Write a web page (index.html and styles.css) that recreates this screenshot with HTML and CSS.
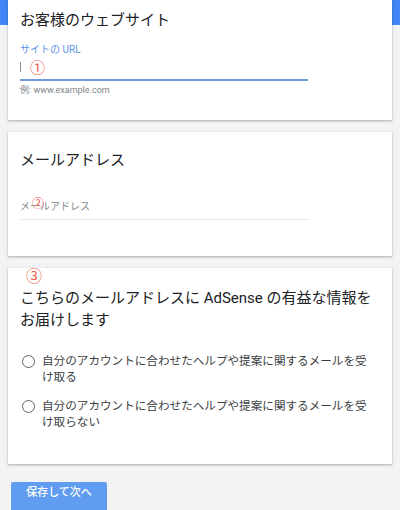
FILE: index.html
```html
<!DOCTYPE html>
<html lang="ja">
<head>
<meta charset="utf-8">
<title>AdSense</title>
<link rel="stylesheet" href="styles.css">
</head>
<body>
<div class="page">
  <section class="card card-site">
    <h2 class="card-title">お客様のウェブサイト</h2>
    <div class="field-label">サイトの URL</div>
    <div class="field-input active"><span class="cursor"></span></div>
    <div class="field-help">例: www.example.com</div>
    <span class="mark mark-1">①</span>
  </section>

  <section class="card card-mail">
    <h2 class="card-title">メールアドレス</h2>
    <div class="field-input plain"><span class="placeholder">メールアドレス</span></div>
    <span class="mark mark-2">②</span>
  </section>

  <section class="card card-info">
    <h2 class="card-title wrap">こちらのメールアドレスに AdSense の有益な情報をお届けします</h2>
    <div class="radios">
      <label class="radio"><span class="circle"></span><span class="radio-text">自分のアカウントに合わせたヘルプや提案に関するメールを受け取る</span></label>
      <label class="radio"><span class="circle"></span><span class="radio-text">自分のアカウントに合わせたヘルプや提案に関するメールを受け取らない</span></label>
    </div>
    <span class="mark mark-3">③</span>
  </section>

  <button class="btn-next">保存して次へ</button>
</div>
</body>
</html>
```

FILE: styles.css
```css
html, body {
  margin: 0;
  padding: 0;
}
body {
  width: 400px;
  height: 510px;
  overflow: hidden;
  background: linear-gradient(#4285f4 0, #4285f4 25px, #f1f3f4 25px);
  font-family: Roboto, "Noto Sans CJK JP", sans-serif;
  color: #202124;
}
.page {
  padding: 0 8px;
}
.card {
  position: relative;
  background: #fff;
  box-shadow: 0 1px 2px rgba(60, 64, 67, 0.3), 0 1px 3px rgba(60, 64, 67, 0.12);
  padding: 0 12px;
  box-sizing: border-box;
  margin-bottom: 12px;
}
.card-title {
  margin: 0;
  font-size: 15px;
  font-weight: 400;
  line-height: 21px;
  color: #202124;
}
.card-site {
  height: 120px;
  padding-top: 10px;
}
.field-label {
  margin-top: 11px;
  font-size: 10px;
  line-height: 15px;
  color: #5f94e6;
}
.field-input {
  width: 288px;
  box-sizing: border-box;
  display: flex;
  align-items: flex-end;
}
.field-input.active {
  height: 24px;
  border-bottom: 2px solid #7199dc;
  padding-bottom: 7px;
}
.cursor {
  display: block;
  width: 1px;
  height: 10px;
  background: #8a8f94;
}
.field-help {
  margin-top: 3px;
  font-size: 9px;
  line-height: 12px;
  color: #80868b;
}
.card-mail {
  height: 124px;
  padding-top: 18px;
}
.field-input.plain {
  margin-top: 29px;
  padding-bottom: 5px;
  border-bottom: 1px solid #e8eaed;
  width: 290px;
}
.placeholder {
  font-size: 10px;
  line-height: 14px;
  color: #80868b;
}
.card-info {
  height: 196px;
  padding-top: 19px;
  margin-bottom: 18px;
}
.card-title.wrap {
  line-height: 22px;
  width: 362px;
}
.radios {
  margin-top: 22px;
  display: flex;
  flex-direction: column;
  gap: 13px;
}
.radio {
  display: flex;
  align-items: flex-start;
  gap: 7px;
  padding-left: 2px;
}
.circle {
  flex: none;
  width: 13px;
  height: 13px;
  box-sizing: border-box;
  border: 1.5px solid #5f6368;
  border-radius: 50%;
  margin-top: 1.5px;
}
.radio-text {
  width: 329px;
  font-size: 11.6px;
  line-height: 16px;
  color: #3c4043;
  line-break: anywhere;
}
.mark {
  position: absolute;
  color: #ee5a4c;
  font-family: "Noto Sans CJK JP", sans-serif;
  line-height: 1;
}
.mark-1 {
  left: 22px;
  top: 59px;
  font-size: 15px;
}
.mark-2 {
  left: 24px;
  top: 65px;
  font-size: 12px;
}
.mark-3 {
  left: 18px;
  top: -1px;
  font-size: 16px;
}
.btn-next {
  display: flex;
  justify-content: center;
  align-items: flex-start;
  margin-left: 3px;
  width: 96px;
  height: 40px;
  padding: 3px 0 0;
  border: none;
  border-radius: 2px;
  background: #609df0;
  color: #fff;
  font-family: Roboto, "Noto Sans CJK JP", sans-serif;
  font-size: 11px;
  font-weight: 500;
  line-height: 16px;
}
```
